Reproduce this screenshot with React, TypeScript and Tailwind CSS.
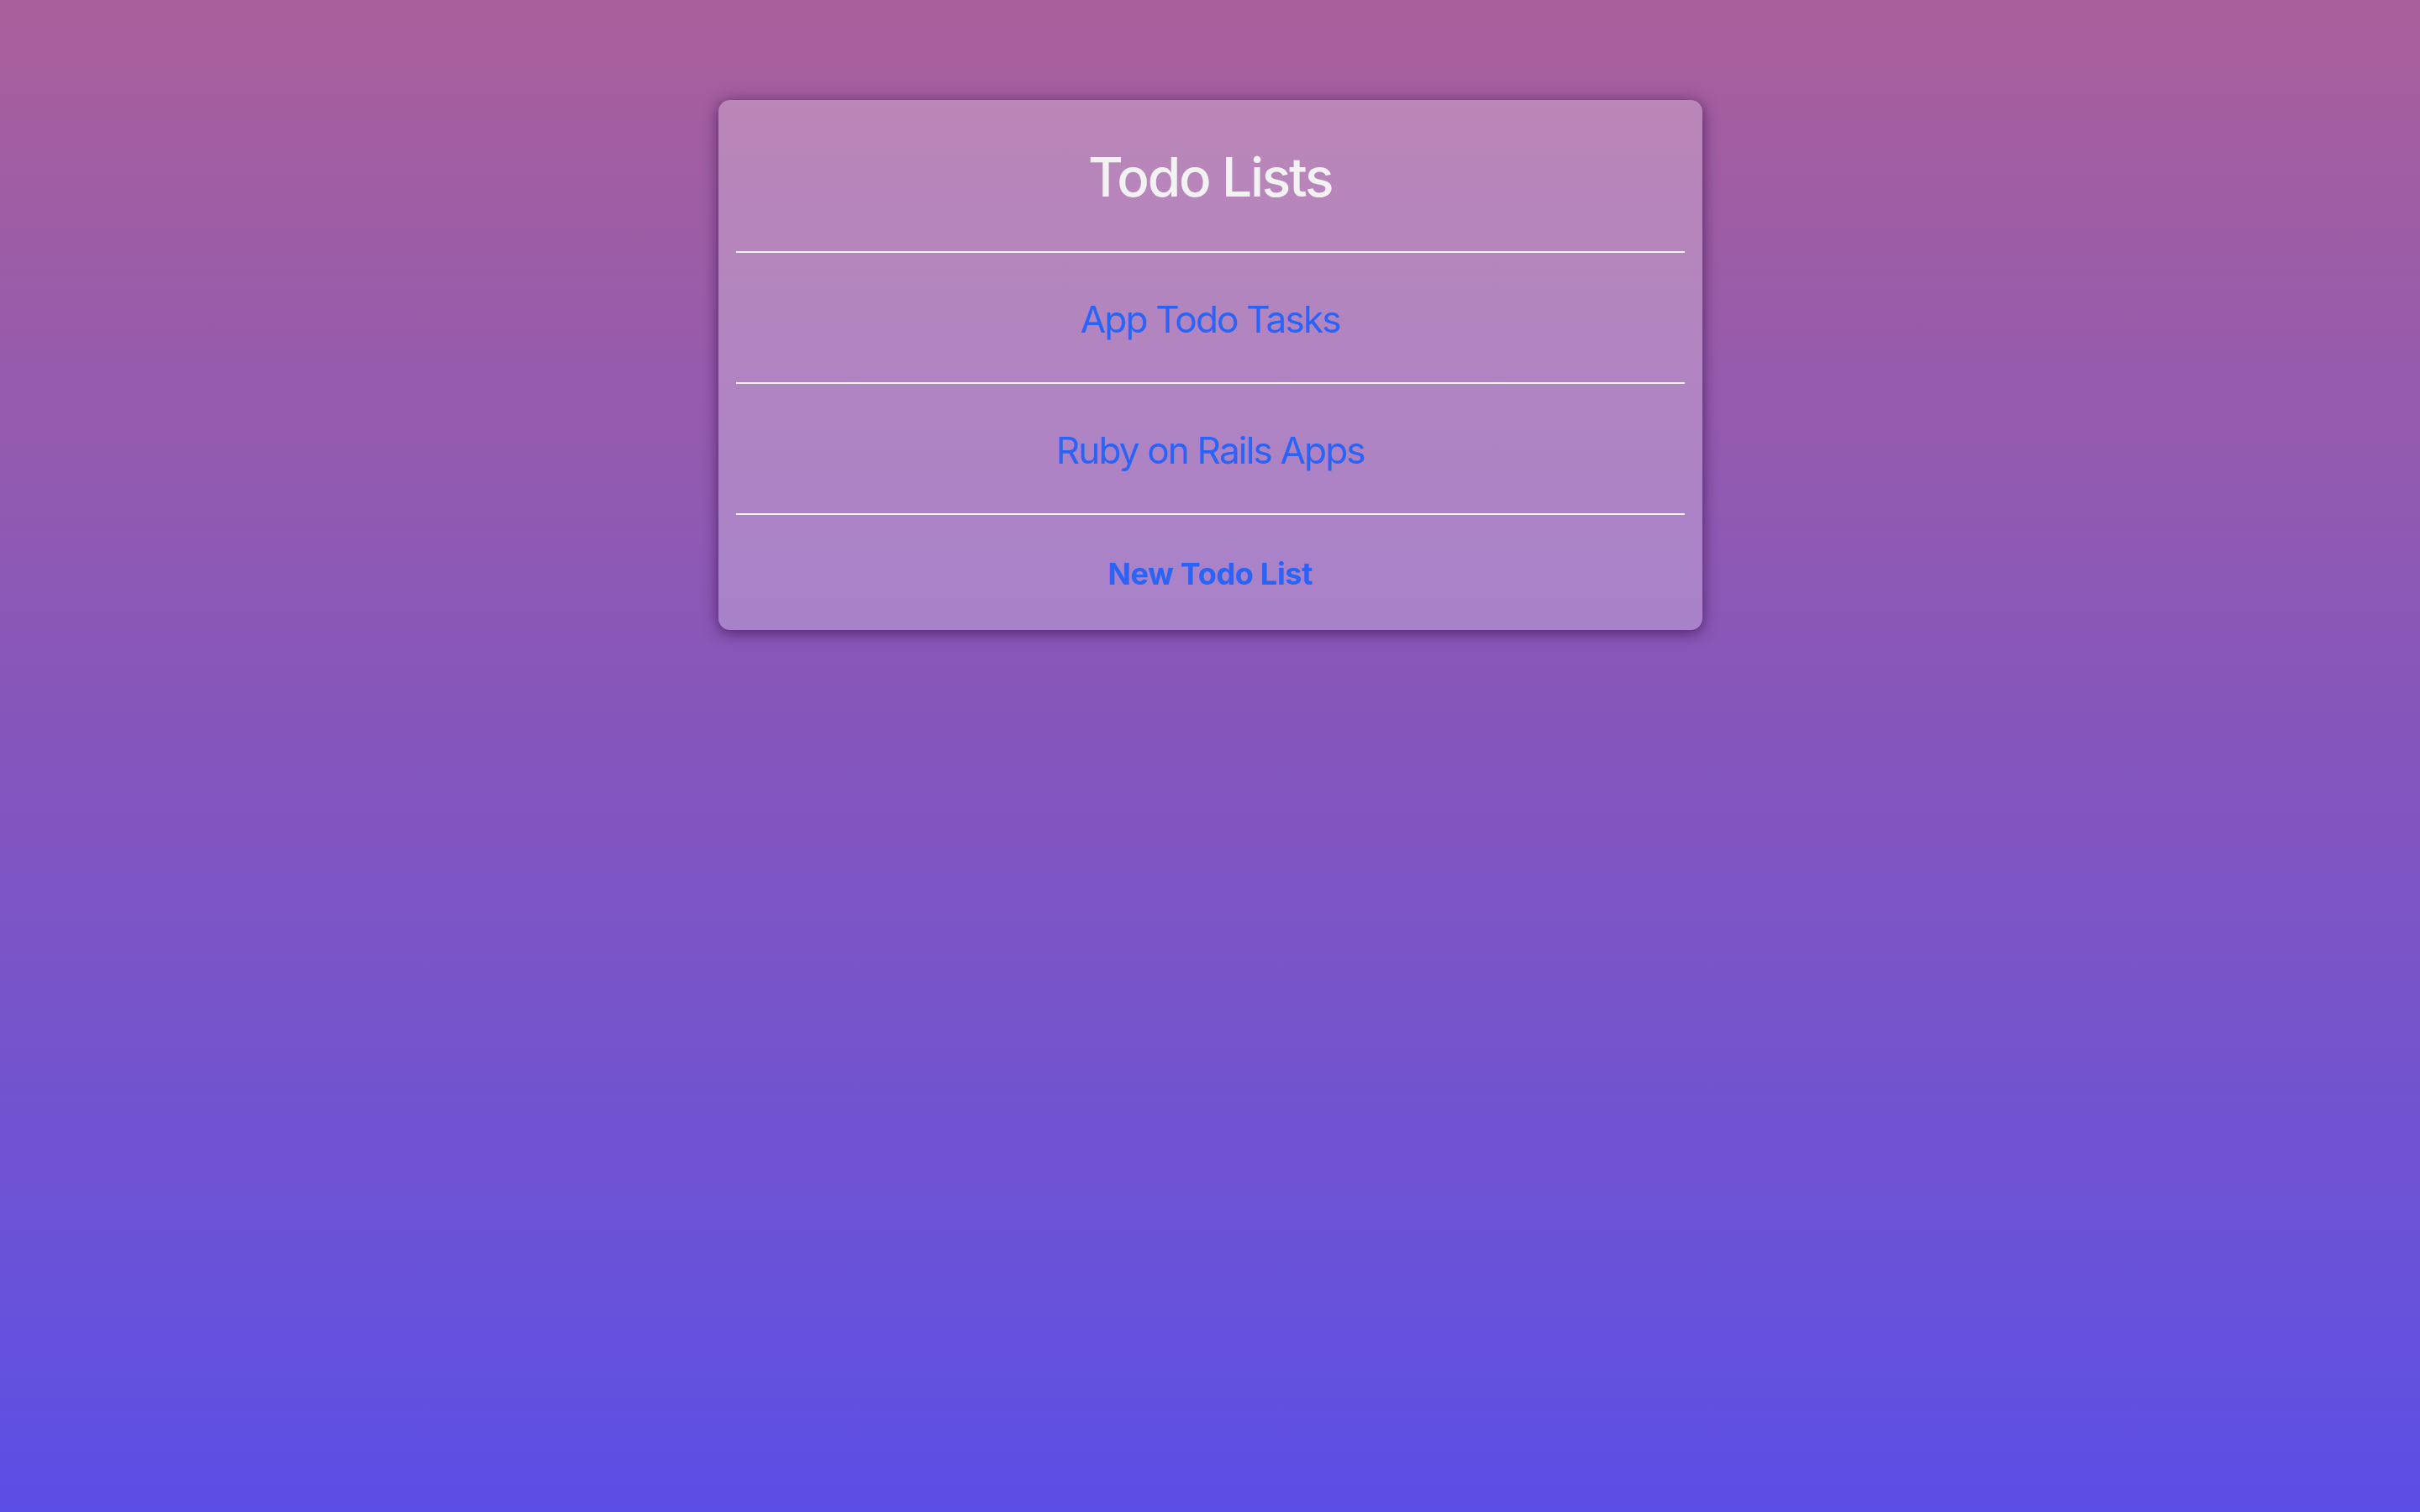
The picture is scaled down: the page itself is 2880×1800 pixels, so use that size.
import React from 'react';

const lists = ['App Todo Tasks', 'Ruby on Rails Apps'];

export default function App() {
  return (
    <div
      className="min-h-screen w-full bg-linear-to-b from-[#a95f9b] via-[#8455bd] to-[#5b4ee6] pt-[119px]"
      style={{ fontFamily: 'Inter, "Noto Sans", sans-serif' }}
    >
      <div className="mx-auto w-[1171px] rounded-[14px] bg-white/25 px-[21px] shadow-[0_3px_18px_rgba(50,10,70,0.7)]">
        {/* Header */}
        <div className="flex h-[182px] items-center justify-center border-b-2 border-white/90 pt-[3px]">
          <h1 className="text-[64px] font-medium leading-none tracking-[-2.3px] text-[#f2f2f2]">Todo Lists</h1>
        </div>

        {/* Lists */}
        {lists.map((name) => (
          <div
            key={name}
            className="flex h-[156px] items-center justify-center border-b-2 border-white/90 pt-[3px]"
          >
            <a href="#" className="text-[44px] leading-none tracking-[-1.8px] text-[#2a64f6]">
              {name}
            </a>
          </div>
        ))}

        {/* Footer action */}
        <div className="flex h-[137px] items-center justify-center pt-[3px]">
          <a href="#" className="text-[36px] font-bold leading-none tracking-[-0.3px] text-[#2a64f6]">
            New Todo List
          </a>
        </div>
      </div>
    </div>
  );
}
